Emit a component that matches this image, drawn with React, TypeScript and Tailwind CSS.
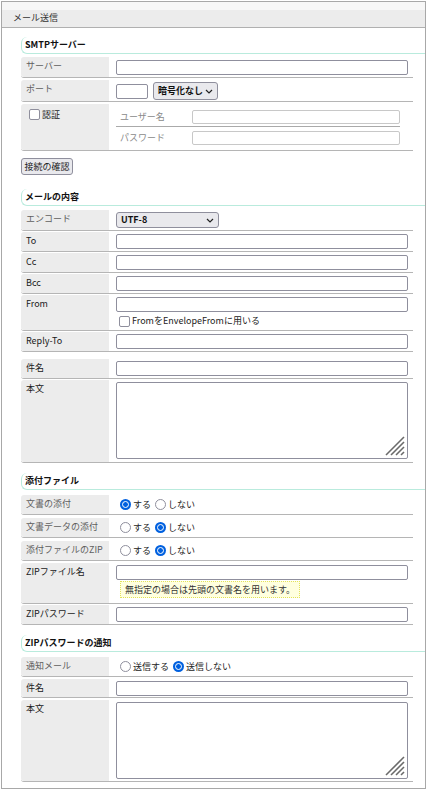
import type { ReactNode } from "react";

// Mail settings panel: SMTP server, message, attachments and ZIP password notice

function SectionTitle({ title, className }: { title: string; className: string }) {
  return (
    <div
      className={`-mr-[12px] h-[17px] rounded-l-[6px] border-b border-l border-[#b9ebdd] pl-[3px] text-[9px] font-bold leading-[16px] text-[#111] ${className}`}
    >
      {title}
    </div>
  );
}

function Row({
  label,
  muted = false,
  className = "mt-[1px]",
  valueClass = "pt-[2px] pb-[2px]",
  children,
}: {
  label: ReactNode;
  muted?: boolean;
  className?: string;
  valueClass?: string;
  children: ReactNode;
}) {
  return (
    <div className={`flex rounded-bl-[3px] border-b border-[#b5b5b5] ${className}`}>
      <div
        className={`w-[88px] shrink-0 rounded-l-[3px] bg-[#ececec] px-[5px] pt-[3px] text-[9px] leading-[12px] ${
          muted ? "text-[#5f5f5f]" : "text-[#1a1a1a]"
        }`}
      >
        {label}
      </div>
      <div className={`min-w-0 flex-1 pl-[7px] pr-[5px] ${valueClass}`}>{children}</div>
    </div>
  );
}

function TextInput({ className = "w-full" }: { className?: string }) {
  return (
    <input
      type="text"
      className={`block h-[15px] rounded-[2px] border border-[#8f8f9d] bg-white ${className}`}
    />
  );
}

function Chevron() {
  return (
    <svg width="8" height="5" viewBox="0 0 8 5" fill="none">
      <polyline points="1,1 4,4 7,1" stroke="#222" strokeWidth="1.2" />
    </svg>
  );
}

function Select({ value, className }: { value: string; className: string }) {
  return (
    <div
      className={`flex items-center justify-between rounded-[3px] border border-[#8f8f9d] bg-[#e9e9ed] pl-[4px] pr-[4px] text-[9px] font-bold text-[#111] ${className}`}
    >
      <span>{value}</span>
      <Chevron />
    </div>
  );
}

function Checkbox() {
  return <span className="block h-[11px] w-[11px] shrink-0 rounded-[2px] border border-[#8f8f9d] bg-white" />;
}

function Radio({ checked = false }: { checked?: boolean }) {
  return checked ? (
    <span className="flex h-[11px] w-[11px] shrink-0 items-center justify-center rounded-full bg-[#0060df]">
      <span className="h-[7px] w-[7px] rounded-full border-[1.5px] border-white bg-[#0060df]" />
    </span>
  ) : (
    <span className="block h-[11px] w-[11px] shrink-0 rounded-full border border-[#8f8f9d] bg-white" />
  );
}

function RadioPair({ yes, no, selected }: { yes: string; no: string; selected: "yes" | "no" }) {
  return (
    <div className="flex h-[15px] items-center pl-[4px] text-[9px] text-[#222]">
      <Radio checked={selected === "yes"} />
      <span className="ml-[2px] mr-[4px]">{yes}</span>
      <Radio checked={selected === "no"} />
      <span className="ml-[2px]">{no}</span>
    </div>
  );
}

function TextArea() {
  return (
    <div className="relative h-[77px] w-full rounded-[2px] border border-[#8f8f9d] bg-white">
      {/* resize grip */}
      <svg className="absolute bottom-[2px] right-[2px]" width="20" height="20" viewBox="0 0 20 20">
        <g stroke="#6b6b6b" strokeWidth="1.6">
          <line x1="1" y1="19" x2="19" y2="1" />
          <line x1="6" y1="19" x2="19" y2="6" />
          <line x1="11" y1="19" x2="19" y2="11" />
          <line x1="16" y1="19" x2="19" y2="16" />
        </g>
      </svg>
    </div>
  );
}

export default function App() {
  return (
    <div className="min-h-screen bg-white pl-[1px] pt-[1px] font-['Noto_Sans_CJK_JP','Noto_Sans',sans-serif]">
      <div className="h-[788px] w-[425px] border border-[#a8a8a8]">
        {/* Title bar */}
        <div className="h-[26px] border-b border-[#b0b0b0] bg-[linear-gradient(to_bottom,#f7f7f7_8px,#ececec_8px)] pl-[11px] pt-[9px] text-[9px] leading-[14px] text-[#333]">
          メール送信
        </div>

        <div className="pl-[19px] pr-[12px]">
          {/* SMTP */}
          <SectionTitle title="SMTPサーバー" className="mt-[9px]" />
          <Row label="サーバー" muted className="mt-[3px]" valueClass="pt-[3px] pb-[2px]">
            <TextInput />
          </Row>
          <Row label="ポート" muted className="mt-[2px]" valueClass="pt-[2px] pb-[1px]">
            <div className="flex items-center gap-[5px]">
              <TextInput className="w-[32px]" />
              <Select value="暗号化なし" className="h-[18px] w-[65px]" />
            </div>
          </Row>
          <div className="mt-[2px] flex rounded-bl-[3px] border-b border-[#b5b5b5]">
            <div className="flex w-[88px] shrink-0 items-start gap-[2px] rounded-l-[3px] bg-[#ececec] pl-[8px] pt-[5px] text-[9px] leading-[11px] text-[#1a1a1a]">
              <Checkbox />
              <span>認証</span>
            </div>
            <div className="flex-1 pl-[7px] pr-[13px]">
              <div className="flex items-center border-b border-[#aaaaaa] pb-[2px] pt-[6px]">
                <span className="w-[76px] shrink-0 pl-[4px] text-[9px] text-[#8a8a8a]">ユーザー名</span>
                <input type="text" className="block h-[14px] flex-1 rounded-[2px] border border-[#c8c8c8] bg-white" />
              </div>
              <div className="flex items-center pb-[5px] pt-[4px]">
                <span className="w-[76px] shrink-0 pl-[4px] text-[9px] text-[#8a8a8a]">パスワード</span>
                <input type="text" className="block h-[14px] flex-1 rounded-[2px] border border-[#c8c8c8] bg-white" />
              </div>
            </div>
          </div>
          <button className="mt-[7px] flex h-[17px] w-[52px] items-center justify-center rounded-[3px] border border-[#8f8f9d] bg-[#e9e9ed] text-[9px] text-[#222]">
            接続の確認
          </button>

          {/* Message */}
          <SectionTitle title="メールの内容" className="mt-[14px]" />
          <Row label="エンコード" muted className="mt-[4px]">
            <Select value="UTF-8" className="h-[16px] w-[103px]" />
          </Row>
          <Row label="To">
            <TextInput />
          </Row>
          <Row label="Cc">
            <TextInput />
          </Row>
          <Row label="Bcc">
            <TextInput />
          </Row>
          <Row label="From">
            <div className="flex flex-col gap-[2px]">
              <TextInput />
              <div className="flex h-[14px] items-center gap-[2px] pl-[3px] text-[9px] text-[#222]">
                <Checkbox />
                <span>FromをEnvelopeFromに用いる</span>
              </div>
            </div>
          </Row>
          <Row label="Reply-To">
            <TextInput />
          </Row>
          <Row label="件名" className="mt-[7px]">
            <TextInput />
          </Row>
          <Row label="本文" valueClass="pt-[2px] pb-[3px]">
            <TextArea />
          </Row>

          {/* Attachments */}
          <SectionTitle title="添付ファイル" className="mt-[10px]" />
          <Row label="文書の添付" muted className="mt-[5px]">
            <RadioPair yes="する" no="しない" selected="yes" />
          </Row>
          <Row label="文書データの添付" muted className="mt-[3px]">
            <RadioPair yes="する" no="しない" selected="no" />
          </Row>
          <Row label="添付ファイルのZIP" muted className="mt-[3px]">
            <RadioPair yes="する" no="しない" selected="no" />
          </Row>
          <Row label="ZIPファイル名" className="mt-[2px]" valueClass="pt-[2px] pb-[5px]">
            <div className="flex flex-col items-start gap-[1px]">
              <TextInput />
              <div className="ml-[4px] flex h-[17px] items-center border border-dotted border-[#e2e25a] bg-[#ffffdf] px-[4px] text-[9px] text-[#333]">
                無指定の場合は先頭の文書名を用います。
              </div>
            </div>
          </Row>
          <Row label="ZIPパスワード">
            <TextInput />
          </Row>

          {/* ZIP password notice */}
          <SectionTitle title="ZIPパスワードの通知" className="mt-[10px]" />
          <Row label="通知メール" muted className="mt-[5px]">
            <RadioPair yes="送信する" no="送信しない" selected="no" />
          </Row>
          <Row label="件名" className="mt-[2px]" valueClass="pt-[2px] pb-[1px]">
            <TextInput />
          </Row>
          <Row label="本文" className="mt-[2px]">
            <TextArea />
          </Row>
        </div>
      </div>
    </div>
  );
}
